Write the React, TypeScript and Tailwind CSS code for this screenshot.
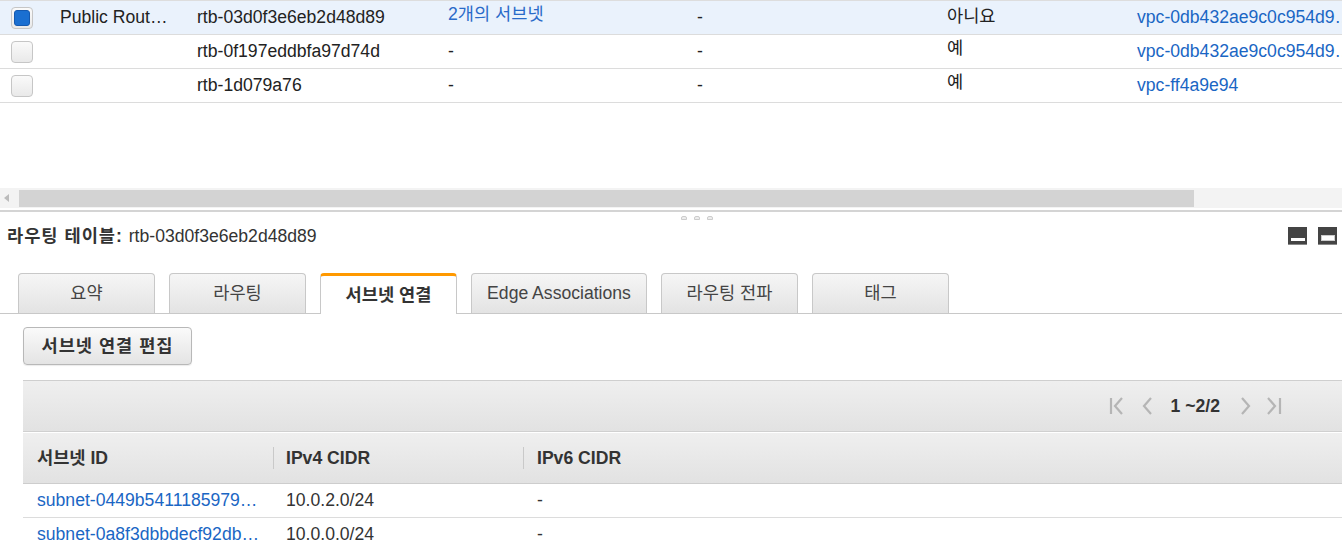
import React from "react";

const font = "font-['Liberation_Sans','Noto_Sans_CJK_KR',sans-serif]";

type RouteRow = {
  name: string;
  id: string;
  assoc: string;
  assocLink?: boolean;
  edge: string;
  main: string;
  vpc: string;
  selected?: boolean;
};

const routeRows: RouteRow[] = [
  { name: "Public Route Table", id: "rtb-03d0f3e6eb2d48d89", assoc: "2개의 서브넷", assocLink: true, edge: "-", main: "아니요", vpc: "vpc-0db432ae9c0c954d9 | Custom", selected: true },
  { name: "", id: "rtb-0f197eddbfa97d74d", assoc: "-", edge: "-", main: "예", vpc: "vpc-0db432ae9c0c954d9 | Custom" },
  { name: "", id: "rtb-1d079a76", assoc: "-", edge: "-", main: "예", vpc: "vpc-ff4a9e94" },
];

const tabs = ["요약", "라우팅", "서브넷 연결", "Edge Associations", "라우팅 전파", "태그"];

const subnets = [
  { id: "subnet-0449b5411185979a1c3", v4: "10.0.2.0/24", v6: "-" },
  { id: "subnet-0a8f3dbbdecf92db1e7", v4: "10.0.0.0/24", v6: "-" },
];

function Checkbox({ checked }: { checked?: boolean }) {
  return (
    <div className="w-[22px] h-[22px] rounded-[4px] border border-[#c6c6c6] bg-gradient-to-b from-[#fafafa] to-[#e9e9e9] flex items-center justify-center">
      {checked && <div className="w-[16px] h-[16px] rounded-[3px] bg-[#1a6fd1] border border-[#1459b0]" />}
    </div>
  );
}

function PanelIcon({ wide }: { wide?: boolean }) {
  return (
    <div className="w-[19px] h-[18px] bg-[#444] border-b border-[#888] flex items-end justify-center pb-[3px]">
      {wide ? (
        <div className="w-[14px] h-[6px] bg-white border border-[#ccc]" />
      ) : (
        <div className="w-[14px] h-[3px] bg-white" />
      )}
    </div>
  );
}

function PagerIcon({ d, w }: { d: string; w: number }) {
  return (
    <svg width={w} height="18" viewBox={`0 0 ${w} 18`} fill="none" stroke="#b5b5b5" strokeWidth="2.2">
      <path d={d} />
    </svg>
  );
}

export default function App() {
  return (
    <div className={`${font} w-[1342px] h-[549px] overflow-hidden bg-white text-[17.6px] text-[#222]`}>
      {/* route tables list */}
      <div className="h-[188px] overflow-hidden border-t border-[#ddd]">
        {routeRows.map((r) => (
          <div
            key={r.id}
            className={`flex items-center h-[34px] border-b border-[#dcdcdc] whitespace-nowrap ${r.selected ? "bg-[#eaf2fc]" : "bg-white"}`}
          >
            <div className="w-[48px] shrink-0 pl-[11px]">
              <Checkbox checked={r.selected} />
            </div>
            <div className="w-[137px] shrink-0 pl-[12px] pr-[17px] truncate">{r.name}</div>
            <div className="w-[251px] shrink-0 pl-[12px] truncate">{r.id}</div>
            <div className={`w-[249px] shrink-0 pl-[12px] truncate ${r.assocLink ? "text-[#2a6bc9] -mt-[6px]" : ""}`}>{r.assoc}</div>
            <div className="w-[250px] shrink-0 pl-[12px]">{r.edge}</div>
            <div className={`w-[190px] shrink-0 pl-[12px] ${r.selected ? "-mt-[2px]" : "-mt-[6px]"}`}>{r.main}</div>
            <div className="w-[232px] shrink-0 pl-[12px] truncate text-[#1a66c4]">{r.vpc}</div>
          </div>
        ))}
      </div>

      {/* horizontal scrollbar */}
      <div className="flex items-center h-[20px] bg-[#f3f3f3]">
        <div className="w-[19px] flex items-center justify-start pl-[4px]">
          <div className="w-0 h-0 border-y-[4px] border-y-transparent border-r-[5px] border-r-[#bbb]" />
        </div>
        <div className="w-[1175px] h-[17px] bg-[#d3d3d3]" />
      </div>
      <div className="h-[2px] bg-white" />
      <div className="h-[2px] bg-[#d4d4d4]" />

      {/* grip */}
      <div className="flex justify-center gap-[7px] pt-[4px] pl-[52px]">
        {[0, 1, 2].map((i) => (
          <div key={i} className="w-[6px] h-[4px] rounded-t-[2px] border border-[#ccc] bg-[#eee]" />
        ))}
      </div>

      {/* detail header */}
      <div className="flex items-center justify-between h-[24px] mt-[4px] pl-[7px] pr-[5px]">
        <div className="text-[#333]">
          <span className="font-bold tracking-[1px]">라우팅 테이블: </span>
          <span>rtb-03d0f3e6eb2d48d89</span>
        </div>
        <div className="flex gap-[11px]">
          <PanelIcon />
          <PanelIcon wide />
        </div>
      </div>

      {/* tabs */}
      <div className="flex items-end gap-[14px] mt-[25px] pl-[18px] h-[41px] border-b border-[#c8c8c8]">
        {tabs.map((t, i) =>
          i === 2 ? (
            <div
              key={t}
              className="w-[137px] h-[41px] -mb-px bg-white border-x border-[#c8c8c8] border-t-[3px] border-t-[#f90] rounded-t-[4px] flex items-center justify-center font-bold text-[#333]"
            >
              {t}
            </div>
          ) : (
            <div
              key={t}
              className={`${i === 3 ? "w-[176px]" : "w-[137px]"} h-[40px] bg-gradient-to-b from-[#f6f6f6] to-[#e3e3e3] border border-b-0 border-[#c8c8c8] rounded-t-[4px] flex items-center justify-center text-[#444]`}
            >
              {t}
            </div>
          )
        )}
      </div>

      {/* action button */}
      <div className="pl-[23px] pt-[13px]">
        <button className="w-[169px] h-[38px] rounded-[4px] border border-[#b8b8b8] bg-gradient-to-b from-[#fafafa] to-[#e4e4e4] font-bold text-[#333] tracking-[1px] shadow-[0_1px_1px_rgba(0,0,0,0.08)]">
          서브넷 연결 편집
        </button>
      </div>

      {/* subnets table */}
      <div className="ml-[23px] mt-[15px] border-t border-[#cfcfcf]">
        <div className="h-[51px] flex items-center justify-end pr-[60px] bg-gradient-to-b from-[#efefef] to-[#e2e2e2] border-b border-[#d0d0d0]">
          <div className="flex items-center">
            <PagerIcon w={15} d="M2 1v16M13 1L6 9l7 8" />
            <div className="w-[17px]" />
            <PagerIcon w={11} d="M10 1L3 9l7 8" />
            <div className="w-[19px]" />
            <span className="font-bold text-[#333]">1 ~2/2</span>
            <div className="w-[21px]" />
            <PagerIcon w={11} d="M1 1l7 8-7 8" />
            <div className="w-[14px]" />
            <PagerIcon w={16} d="M2 1l7 8-7 8M14 1v16" />
          </div>
        </div>
        <div className="h-[52px] flex items-center bg-gradient-to-b from-[#efefef] to-[#e2e2e2] border-t border-white border-b border-b-[#cdcdcd] font-bold text-[#333]">
          <div className="w-[250px] pl-[14px]">서브넷 ID</div>
          <div className="w-[250px] pl-[12px] border-l border-[#c9c9c9] h-[22px] flex items-center">IPv4 CIDR</div>
          <div className="pl-[13px] border-l border-[#c9c9c9] h-[22px] flex items-center">IPv6 CIDR</div>
        </div>
        {subnets.map((s) => (
          <div key={s.id} className="h-[34px] flex items-center border-b border-[#dcdcdc] whitespace-nowrap">
            <div className="w-[250px] pl-[14px] pr-[11px] truncate text-[#1a66c4]">{s.id}</div>
            <div className="w-[250px] pl-[13px] text-[#333]">{s.v4}</div>
            <div className="pl-[14px] text-[#333]">{s.v6}</div>
          </div>
        ))}
      </div>
    </div>
  );
}
